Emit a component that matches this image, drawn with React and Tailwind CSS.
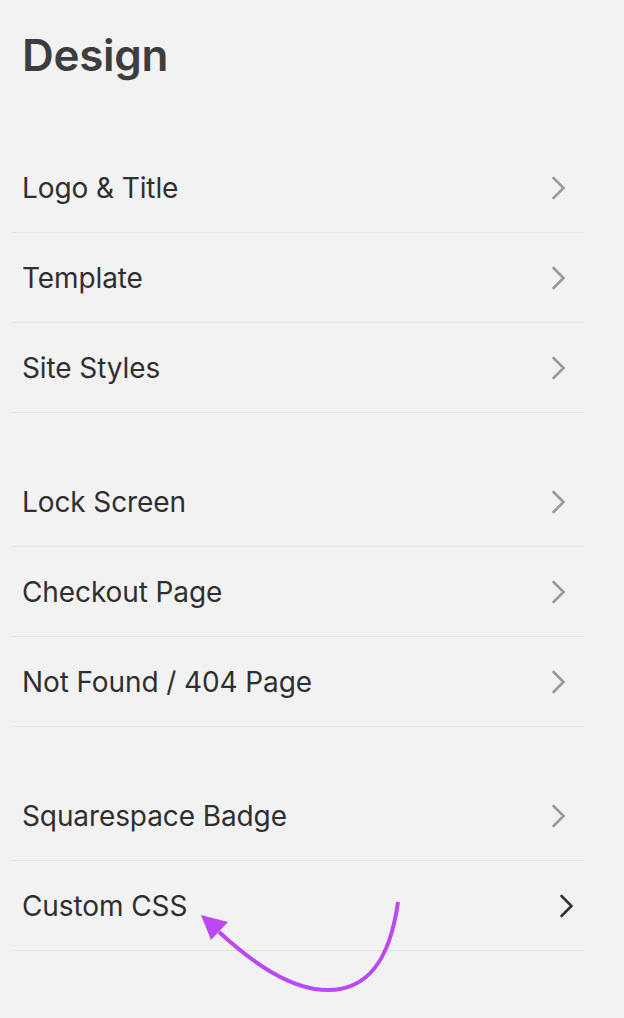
export default function App() {
  const groups = [
    ["Logo & Title", "Template", "Site Styles"],
    ["Lock Screen", "Checkout Page", "Not Found / 404 Page"],
    ["Squarespace Badge", "Custom CSS"],
  ];
  const Chevron = ({ dark }) => (
    <svg width="16" height="24" viewBox="0 0 16 24" className="shrink-0">
      <path d="M2.5 2 L12.5 12 L2.5 22" fill="none" stroke={dark ? "#333333" : "#9a9a9a"} strokeWidth="2.6" strokeLinecap="round" strokeLinejoin="miter" />
    </svg>
  );
  return (
    <div className="relative w-[624px] h-[1018px] bg-[#f2f2f2] overflow-hidden" style={{ fontFamily: "Inter, 'Liberation Sans', sans-serif" }}>
      <div className="w-[612px] h-full">
        <div className="pl-[22px] pt-[26px] h-[143px]">
          <h1 className="text-[44px] leading-[58px] font-semibold text-[#3d3d3d] tracking-[-0.3px]">Design</h1>
        </div>
        <div className="flex flex-col gap-[44px]">
          {groups.map((g, gi) => (
            <div key={gi} className="flex flex-col ml-[12px] w-[572px]">
              {g.map((item, ii) => {
                const last = gi === 2 && ii === 1;
                return (
                  <div key={item} className="h-[90px] flex items-center justify-between border-b border-[#e3e3e3] pl-[10px]">
                    <span className="text-[28px] text-[#2f2f2f] tracking-[-0.1px]">{item}</span>
                    <div className={last ? "mr-[9px]" : "mr-[17px]"}>
                      <Chevron dark={last} />
                    </div>
                  </div>
                );
              })}
            </div>
          ))}
        </div>
      </div>
      <svg className="absolute left-0 top-0 pointer-events-none" width="624" height="1018" viewBox="0 0 624 1018">
        <path d="M398 902 C390 960 368 990 328 990 C290 990 252 962 219 932" fill="none" stroke="#bb48f2" strokeWidth="4" strokeLinecap="butt" />
        <polygon points="201,915 228,922 211,940" fill="#bb48f2" />
      </svg>
    </div>
  );
}
